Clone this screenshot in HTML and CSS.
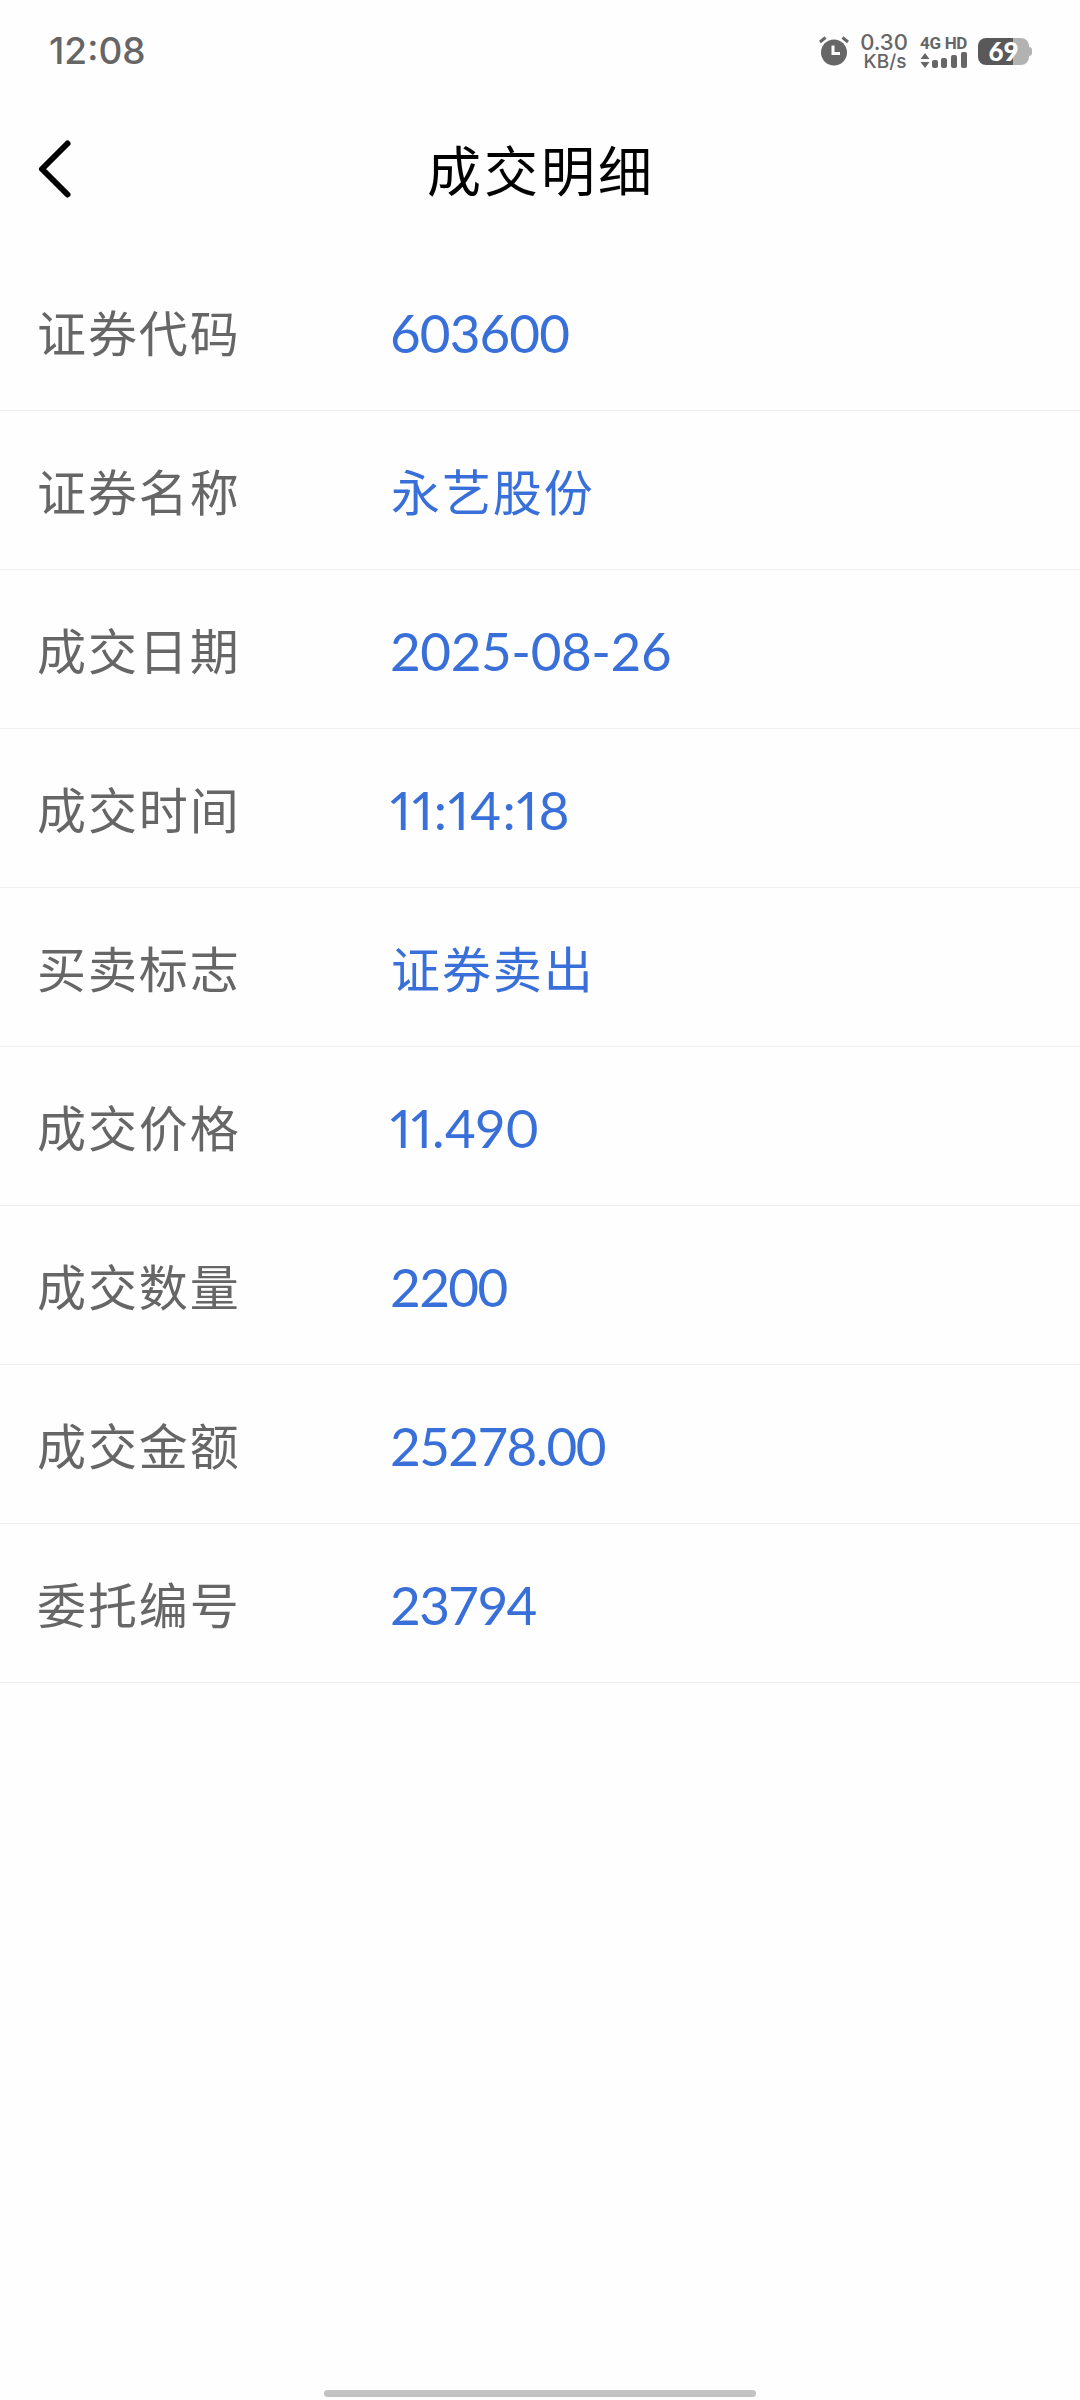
FILE: index.html
```html
<!DOCTYPE html>
<html lang="zh-CN">

<head>
    <meta charset="UTF-8">
    <meta name="viewport" content="width=device-width, initial-scale=1.0">
    <title>成交明细</title>
    <link rel="stylesheet" href="styles.css">
</head>

<body>
    <div class="status-bar">
        <span class="clock">12:08</span>
        <div class="status-icons">
            <svg class="alarm" width="30" height="30" viewBox="0 0 30 30">
                <circle cx="15" cy="16.5" r="13" fill="#666" />
                <path d="M1 6 L6.5 1.5 M29 6 L23.5 1.5" stroke="#666" stroke-width="3" />
                <path d="M14 9.5 V17.5 H21" fill="none" stroke="#fff" stroke-width="3" />
            </svg>
            <div class="speed">
                <span class="speed-num">0.30</span>
                <span class="speed-unit">KB/s</span>
            </div>
            <div class="network">
                <span class="network-type">4G HD</span>
                <svg width="48" height="16" viewBox="0 0 48 16" fill="#666">
                    <path d="M0.5 7 L5 1 L9.5 7 Z M0.5 10 L5 16 L9.5 10 Z" />
                    <rect x="12" y="8" width="6" height="8" rx="2" />
                    <rect x="21" y="6" width="6" height="10" rx="2" />
                    <rect x="31" y="3" width="6" height="13" rx="2" />
                    <rect x="41" y="0" width="6" height="16" rx="2" />
                </svg>
            </div>
            <div class="battery">
                <span class="battery-level">69</span>
            </div>
        </div>
    </div>

    <div class="nav">
        <svg class="back" width="36" height="60" viewBox="0 0 36 60">
            <path d="M31.5 4.5 L6 30 L31.5 55.5" fill="none" stroke="#000" stroke-width="6" stroke-linecap="round" stroke-linejoin="round" />
        </svg>
        <h1>成交明细</h1>
    </div>

    <div class="list">
        <div class="row"><span class="label">证券代码</span><span class="value">603600</span></div>
        <div class="row"><span class="label">证券名称</span><span class="value text">永艺股份</span></div>
        <div class="row"><span class="label">成交日期</span><span class="value date">2025-08-26</span></div>
        <div class="row"><span class="label">成交时间</span><span class="value time">11:14:18</span></div>
        <div class="row"><span class="label">买卖标志</span><span class="value text">证券卖出</span></div>
        <div class="row"><span class="label">成交价格</span><span class="value price">11.490</span></div>
        <div class="row"><span class="label">成交数量</span><span class="value number">2200</span></div>
        <div class="row"><span class="label">成交金额</span><span class="value number">25278.00</span></div>
        <div class="row"><span class="label">委托编号</span><span class="value number">23794</span></div>
    </div>

    <div class="home-bar"></div>
</body>

</html>
```

FILE: styles.css
```css
* {
    box-sizing: border-box;
}

body {
    display: flex;
    flex-direction: column;
    margin: 0;
    height: 2400px;
    background-color: #fefefe;
    font-family: "Noto Sans CJK SC", sans-serif;
}

.status-bar {
    display: flex;
    justify-content: space-between;
    align-items: center;
    height: 102px;
    padding: 0 48px 0 49px;
    color: #666;
    font-family: Inter, sans-serif;
}

.clock {
    padding-bottom: 2px;
    font-size: 37px;
    font-weight: 500;
}

.status-icons {
    display: flex;
    align-items: center;
}

.speed {
    display: flex;
    flex-direction: column;
    align-items: center;
    width: 50px;
    margin-left: 10px;
    font-weight: 500;
}

.speed-num {
    font-size: 22px;
    line-height: 20px;
}

.speed-unit {
    padding-left: 2px;
    font-size: 19px;
    line-height: 19px;
}

.network {
    display: flex;
    flex-direction: column;
    width: 48px;
    margin-left: 11px;
}

.network-type {
    font-family: Roboto, sans-serif;
    font-size: 17px;
    line-height: 17px;
    font-weight: 700;
    letter-spacing: -0.3px;
    white-space: nowrap;
}

.battery {
    position: relative;
    width: 51px;
    height: 27px;
    margin: 0 3px 0 10px;
    border-radius: 8px;
    background: linear-gradient(to right, #595959 69%, #b2b2b2 69%);
    color: #fff;
    text-align: center;
}

.battery::after {
    content: "";
    position: absolute;
    left: 51px;
    top: 9px;
    width: 3px;
    height: 9px;
    border-radius: 0 3px 3px 0;
    background-color: #b2b2b2;
}

.battery-level {
    display: block;
    font-family: Lato, sans-serif;
    font-size: 26px;
    line-height: 26px;
    font-weight: 900;
}

.nav {
    display: grid;
    grid-template-columns: 1fr auto 1fr;
    align-items: center;
    height: 133px;
    padding: 0 34px 0 36px;
}

h1 {
    margin: 0;
    font-size: 54px;
    font-weight: 400;
    letter-spacing: 3px;
    color: #000;
}

.list {
    flex: 1;
    padding-top: 17px;
}

.row {
    display: flex;
    align-items: center;
    height: 159px;
    padding-left: 37px;
    border-bottom: 1px solid #efefef;
    line-height: 72px;
}

.label {
    width: 353px;
    font-size: 49px;
    letter-spacing: 1.9px;
    color: #666;
}

.value {
    padding-top: 3px;
    font-family: Lato, sans-serif;
    font-size: 53px;
    letter-spacing: -0.9px;
    color: #386fd8;
}

.date {
    letter-spacing: -0.4px;
}

.number {
    letter-spacing: -1.6px;
}

/* narrow 1s */
.time,
.price {
    font-variant-numeric: proportional-nums;
    letter-spacing: 0.9px;
}

.price {
    letter-spacing: 0;
}

.text {
    padding: 0 0 0 1px;
    font-family: "Noto Sans CJK SC", sans-serif;
    font-size: 49px;
    letter-spacing: 1.9px;
}

.home-bar {
    align-self: center;
    width: 432px;
    height: 7px;
    margin-bottom: 3px;
    border-radius: 4px;
    background-color: #c2c2c2;
}
```
